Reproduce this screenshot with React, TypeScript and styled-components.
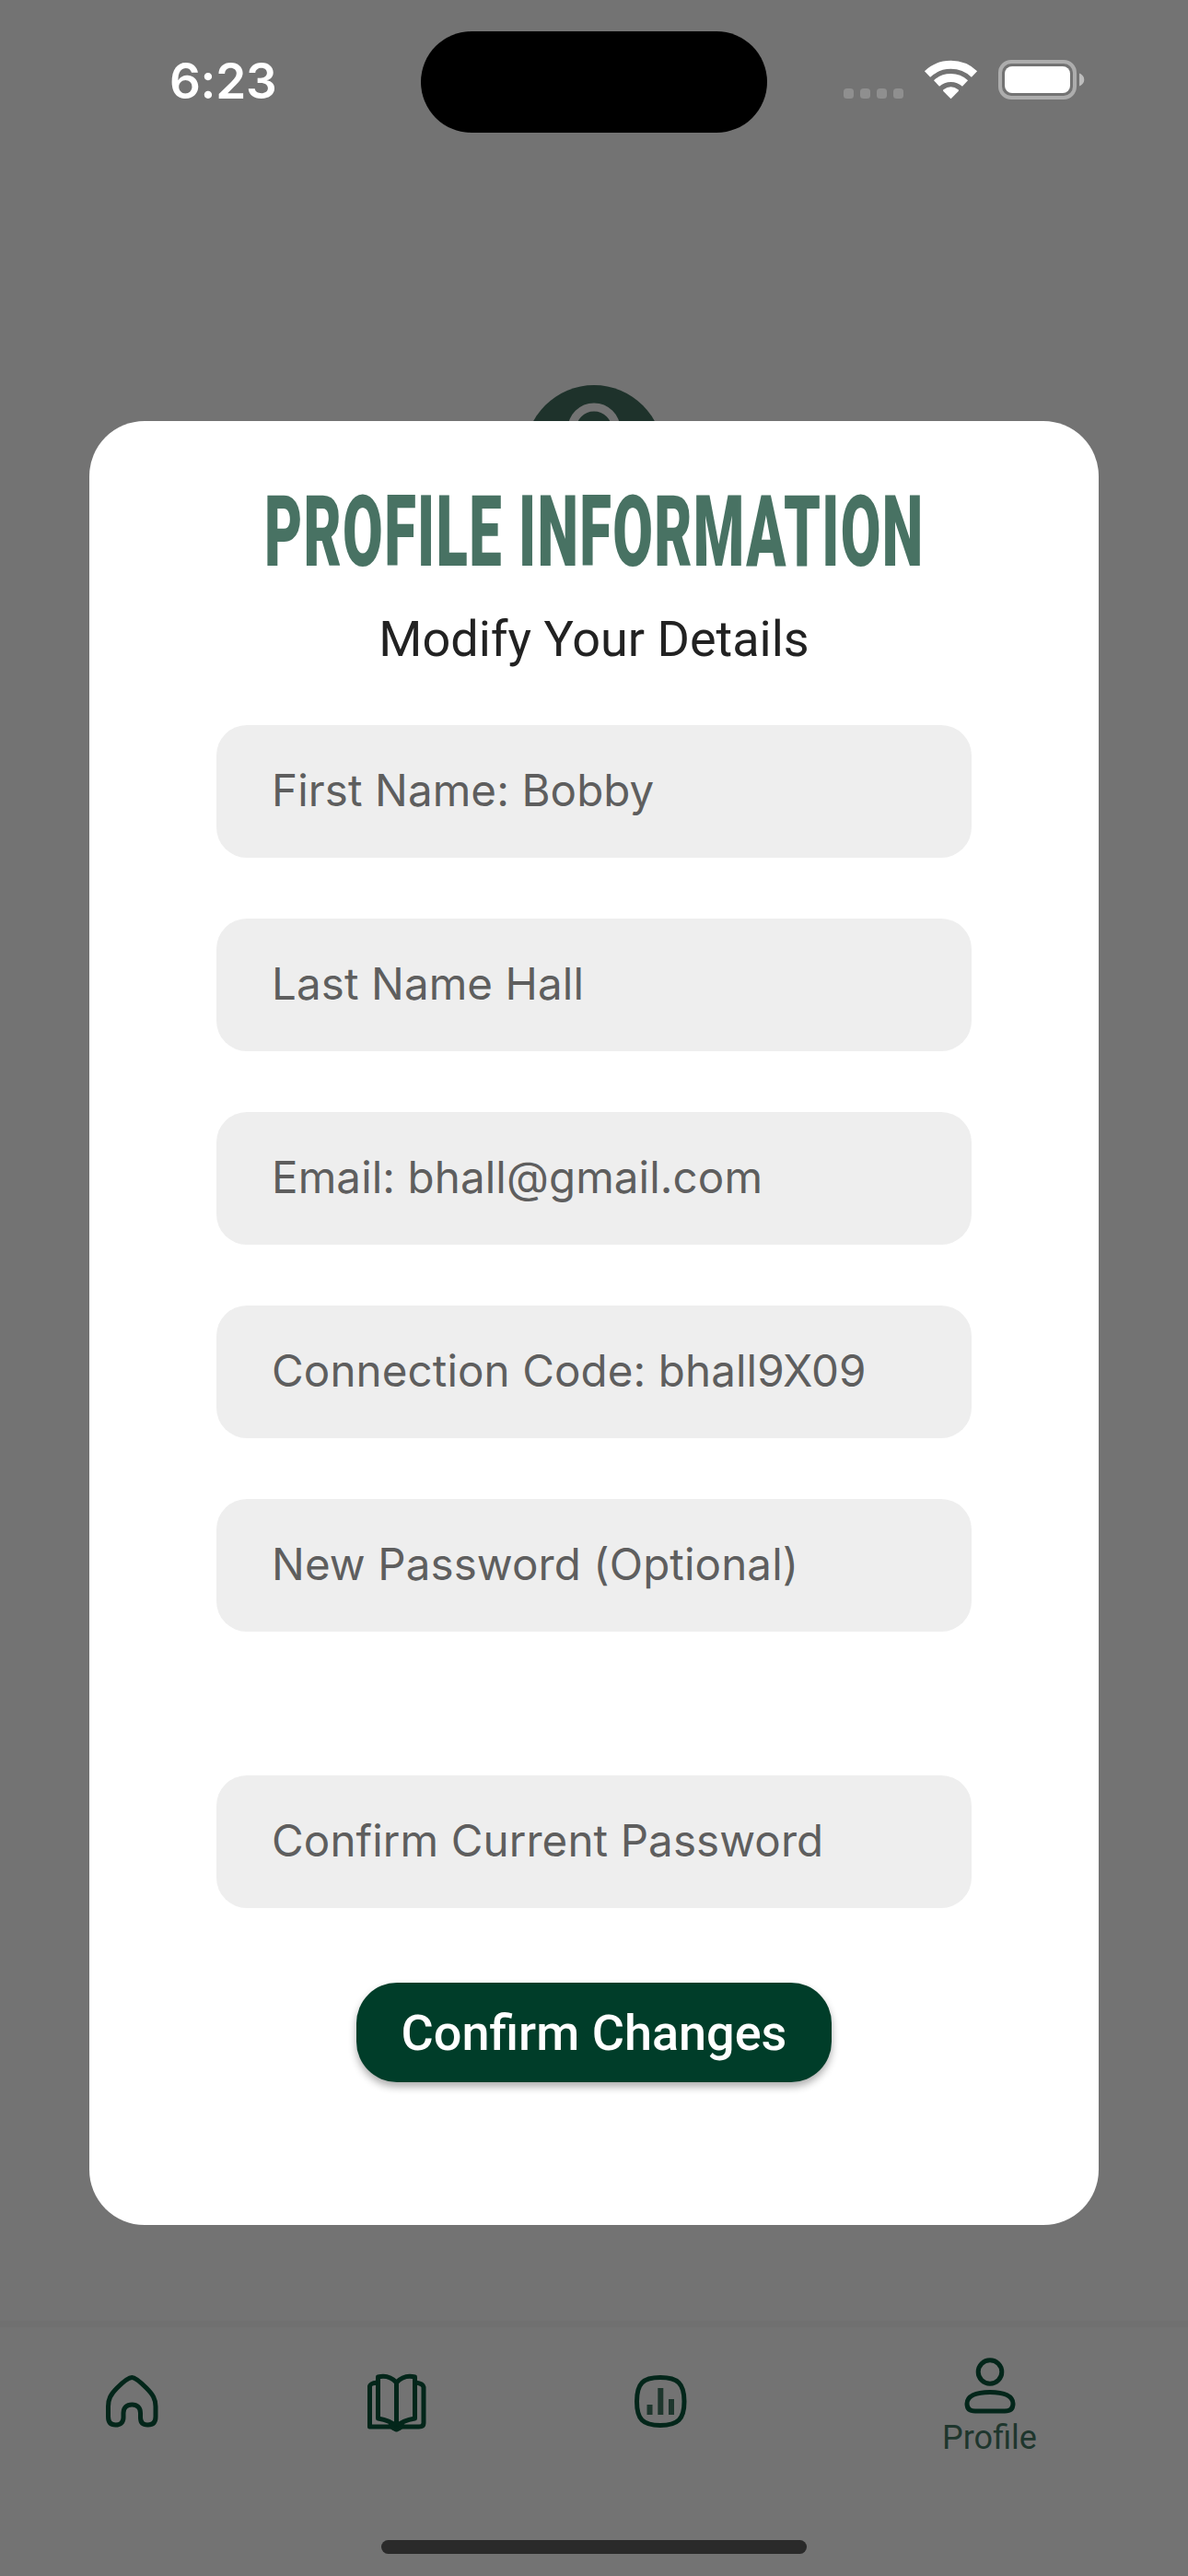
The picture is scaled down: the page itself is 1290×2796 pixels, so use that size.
import React from "react";
import styled, { createGlobalStyle } from "styled-components";

const Global = createGlobalStyle`
  * { box-sizing: border-box; }
  body { margin: 0; background: #737373; }
`;

const Screen = styled.div`
  position: relative;
  width: 1290px;
  height: 2796px;
  overflow: hidden;
  background: #737373;
  display: flex;
  flex-direction: column;
  font-family: Roboto, sans-serif;
`;

const StatusBar = styled.header`
  height: 177px;
  flex: none;
  padding: 33px 108px 0 184px;
  display: grid;
  grid-template-columns: 273px 376px 1fr;
`;

const Clock = styled.time`
  font: 600 53px/110px Inter, sans-serif;
  letter-spacing: -0.3px;
  color: #fff;
`;

const Island = styled.div`
  height: 110px;
  margin-top: 1px;
  border-radius: 55px;
  background: #000;
`;

const StatusIcons = styled.div`
  display: flex;
  align-items: flex-start;
  justify-content: flex-end;
  padding-top: 32px;
`;

const Avatar = styled.svg`
  flex: none;
  align-self: center;
  margin-top: 241px;
`;

const Modal = styled.form`
  position: absolute;
  left: 97px;
  top: 457px;
  width: 1096px;
  height: 1958px;
  margin: 0;
  padding: 66px 138px 0;
  border-radius: 60px;
  background: #fff;
  display: flex;
  flex-direction: column;
  align-items: center;
`;

const Title = styled.h1`
  margin: 0;
  height: 110px;
  font: 900 107px/110px Roboto, sans-serif;
  letter-spacing: 2.200px;
  color: #487263;
  white-space: nowrap;
  transform: scaleX(0.592);
`;

const Subtitle = styled.p`
  margin: 29px 0 0;
  font-size: 54px;
  line-height: 64px;
  color: #222;
  white-space: nowrap;
`;

const Fields = styled.div`
  width: 820px;
  margin-top: 61px;
  display: flex;
  flex-direction: column;
  gap: 66px;
`;

const Field = styled.input<{ $extraTop?: boolean }>`
  width: 100%;
  height: 144px;
  margin: ${(p) => (p.$extraTop ? "90px" : "0")} 0 0;
  padding: 0 60px 4px;
  border: 0;
  border-radius: 33px;
  background: #eee;
  font: 400 47.500px Inter, sans-serif;
  letter-spacing: 0.1px;
  color: #5e5e5e;
  outline: none;
  &::placeholder { color: #5e5e5e; opacity: 1; }
`;

const Submit = styled.button`
  width: 516px;
  height: 108px;
  margin-top: 81px;
  padding: 2px 0 0;
  border: 0;
  border-radius: 44px;
  background: #003d29;
  color: #fff;
  font: 500 54px/106px Roboto, sans-serif;
  box-shadow: 0 5px 8px rgba(0, 0, 0, 0.32);
  white-space: nowrap;
`;

const TabBar = styled.nav`
  margin-top: auto;
  height: 277px;
  flex: none;
  border-top: 7px solid #707070;
  padding: 28px 1px 0 0;
  display: grid;
  grid-template-columns: 286px 287px 287px 1fr;
  position: relative;
`;

const Tab = styled.a<{ $raised?: boolean }>`
  display: flex;
  flex-direction: column;
  align-items: center;
  padding-top: ${(p) => (p.$raised ? "0" : "19px")};
  color: #1e362d;
  font-size: 36px;
  line-height: 42px;

  svg {
    overflow: visible;
  }
`;

const TabLabel = styled.span`
  margin-top: 5px;
`;

const HomeIndicator = styled.div`
  position: absolute;
  left: 414px;
  bottom: 24px;
  width: 462px;
  height: 15px;
  border-radius: 8px;
  background: #2a2a2a;
`;

const FIELDS = [
  "First Name: Bobby",
  "Last Name Hall",
  "Email: bhall@gmail.com",
  "Connection Code: bhall9X09",
  "New Password (Optional)",
  "Confirm Current Password",
];

const INK = "#03261a";

function StatusGlyphs() {
  return (
    <svg width="266" height="44" viewBox="0 0 266 44">
      <g fill="#8f8f8f">
        {[0, 18, 36, 54].map((x) => (
          <rect key={x} x={x} y="31" width="11" height="11" rx="3.5" />
        ))}
      </g>
      <g fill="none" stroke="#fff">
        <path d="M91 15.500A37 37 0 0 1 142 15.500" strokeWidth="9" />
        <path d="M101 25.500A23 23 0 0 1 132 25.500" strokeWidth="9" />
      </g>
      <path d="M116.500 42.200L108.300 34Q107.500 33 108.500 32.200Q116.500 26.200 124.500 32.200Q125.500 33 124.700 34Z" fill="#fff" />
      <rect x="170" y="2" width="81" height="39" rx="12" fill="none" stroke="#adadad" strokeWidth="4" />
      <rect x="175" y="7" width="71" height="29" rx="8" fill="#fff" />
      <path d="M256 14.500C263 17 263 26 256 28.500Z" fill="#bdbdbd" />
    </svg>
  );
}

function HomeIcon() {
  return (
    <svg width="66" height="66" viewBox="0 0 66 66" fill="none" stroke={INK} strokeWidth="5" strokeLinejoin="round">
      <path d="M33.300 7.500C36 7.500 43 13 49 19C56 26 59 31 59 39V50C59 56 56 59 50.500 59C45 59 42.500 56 42.500 51V46C42.500 40 39 37 33.300 37S24 40 24 46V51C24 56 21 59 15.500 59C10 59 7.500 56 7.500 50V39C7.500 31 10 26 17 19C23 13 30 7.500 33.300 7.500Z" />
    </svg>
  );
}

function BookIcon() {
  return (
    <svg width="66" height="66" viewBox="0 0 66 66" fill="none" stroke={INK} strokeWidth="5" strokeLinejoin="round">
      <path d="M33.500 13Q25 4 13.500 7V52Q27 54 33.500 61Q40 54 53.500 52V7Q42 4 33.500 13V61" />
      <path d="M12.500 13Q5 14 4.500 17V61H28Q33.500 66 39 61H58Q63 61 63 57V18Q62 14 54.500 13" />
      <path d="M27 60L33.500 64L40 60L33.500 57Z" fill={INK} />
    </svg>
  );
}

function ChartIcon() {
  return (
    <svg width="66" height="66" viewBox="0 0 66 66" fill="none" stroke={INK} strokeWidth="5">
      <path d="M33 7.500C52 7.500 59 14 59 33.500S52 59.500 33 59.500S7.500 53 7.500 33.500S14 7.500 33 7.500Z" />
      <path d="M21.500 37V48M33.300 19V48M45 31V48" stroke="#1e362d" strokeWidth="6" />
    </svg>
  );
}

function PersonIcon() {
  return (
    <svg width="66" height="66" viewBox="0 0 66 66" fill="none" stroke={INK} strokeWidth="5">
      <circle cx="33" cy="20.500" r="12.800" />
      <path d="M33 42.500C49 42.500 58 47 58 55Q58 63 49 63H17Q8 63 8 55C8 47 17 42.500 33 42.500Z" />
    </svg>
  );
}

export default function App() {
  return (
    <Screen>
      <Global />
      <StatusBar>
        <Clock>6:23</Clock>
        <Island />
        <StatusIcons>
          <StatusGlyphs />
        </StatusIcons>
      </StatusBar>
      <Avatar width="150" height="150" viewBox="0 0 150 150">
        <circle cx="75" cy="75" r="75" fill="#1e322b" />
        <circle cx="75" cy="48" r="24" fill="none" stroke="#737373" strokeWidth="9" />
      </Avatar>
      <TabBar>
        <Tab><HomeIcon /></Tab>
        <Tab><BookIcon /></Tab>
        <Tab><ChartIcon /></Tab>
        <Tab $raised>
          <PersonIcon />
          <TabLabel>Profile</TabLabel>
        </Tab>
        <HomeIndicator />
      </TabBar>
      <Modal>
        <Title>PROFILE INFORMATION</Title>
        <Subtitle>Modify Your Details</Subtitle>
        <Fields>
          {FIELDS.map((label, i) => (
            <Field key={label} placeholder={label} $extraTop={i === 5} />
          ))}
        </Fields>
        <Submit type="button">Confirm Changes</Submit>
      </Modal>
    </Screen>
  );
}
